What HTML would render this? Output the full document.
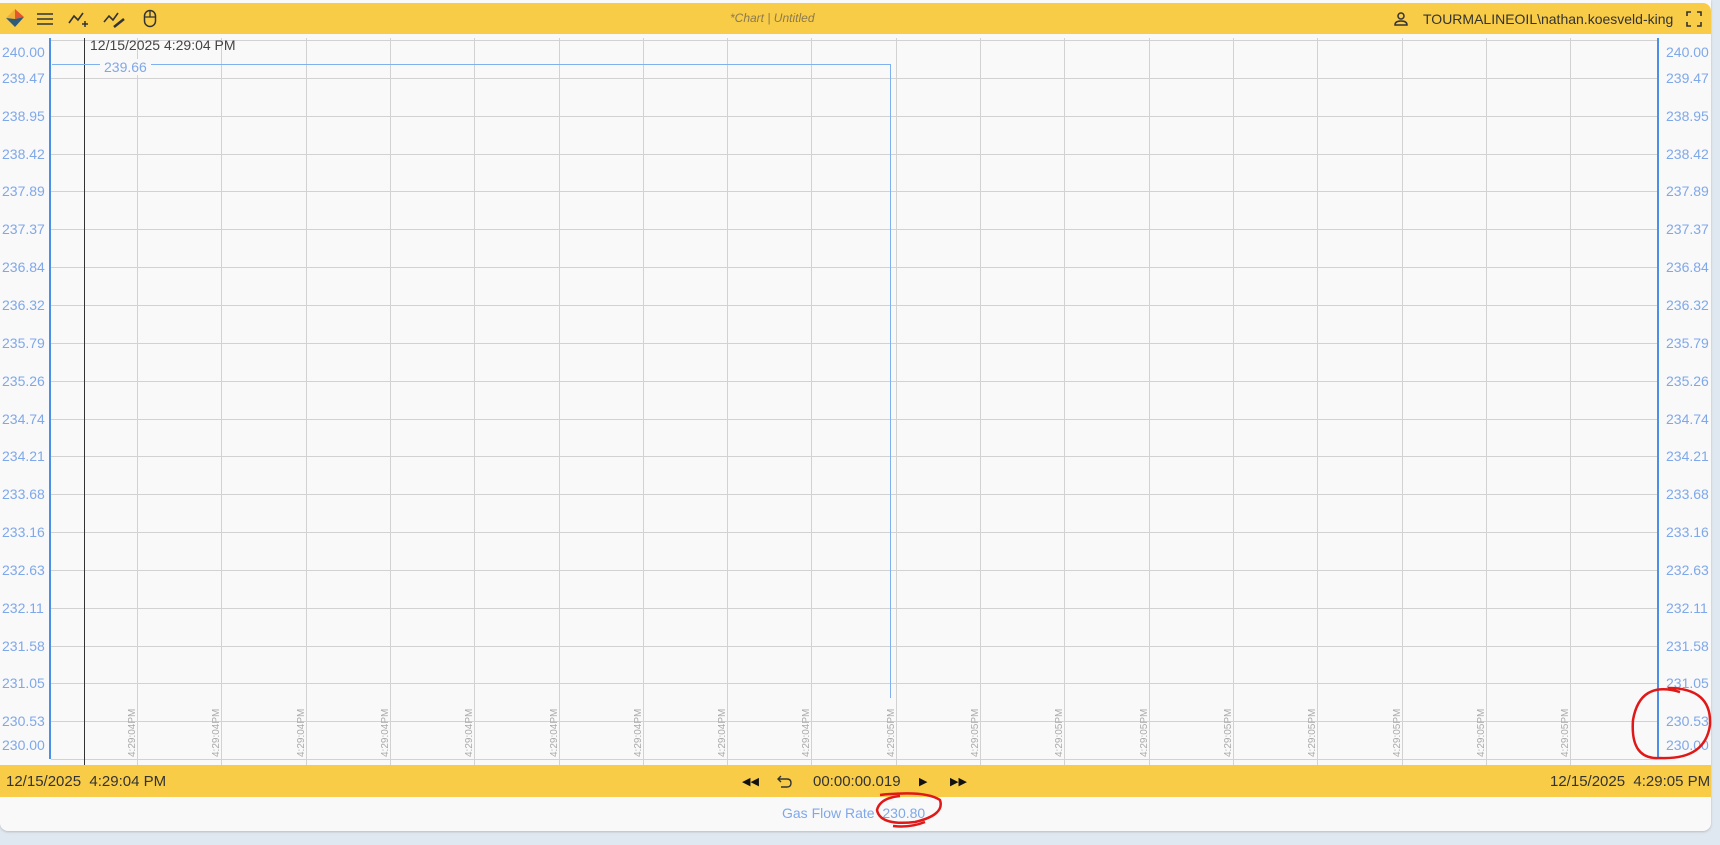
<!DOCTYPE html><html><head><style>
body{margin:0;width:1720px;height:845px;overflow:hidden;background:#dfe7f1;font-family:"Liberation Sans",sans-serif;position:relative}
.card{position:absolute;left:0;top:0;width:1711px;height:831px;background:#f9f9f9;border-radius:0 0 8px 8px;box-shadow:0 1px 2px #bbb}
.top{position:absolute;left:0;top:3px;width:1711px;height:31px;background:#f9cc47;border-radius:0 8px 0 0}
.bot{position:absolute;left:0;top:765px;width:1711px;height:32px;background:#f9cc47;font-size:15px;color:#333}
.abs{position:absolute}
.yl{position:absolute;font-size:14px;color:#7fa8ea;line-height:14px}
.tl{position:absolute;font-size:10px;color:#aaa;transform:rotate(-90deg);transform-origin:0 0;white-space:nowrap}
</style></head><body>
<div class="card"></div>
<div class="top">
<svg class="abs" style="left:4px;top:4px" width="22" height="24" viewBox="0 0 22 24"><path d="M11 2 L20 10 L11 12Z" fill="#e4572e"/><path d="M11 2 L2 11 L11 12Z" fill="#f2b134"/><path d="M2 11 L11 12 L20 10 L11 20Z" fill="#2d5b7a"/></svg>
<svg class="abs" style="left:36px;top:9px" width="18" height="14"><path d="M1 2H17M1 7H17M1 12H17" stroke="#333" stroke-width="1.6"/></svg>
<svg class="abs" style="left:68px;top:8px" width="22" height="18"><path d="M1 12L6 5L10 9L15 2" fill="none" stroke="#333" stroke-width="1.6"/><path d="M14 13H20M17 10V16" stroke="#333" stroke-width="1.5"/></svg>
<svg class="abs" style="left:103px;top:8px" width="24" height="18"><path d="M1 11L6 5L10 9L15 2" fill="none" stroke="#333" stroke-width="1.6"/><path d="M11 16L21 8" stroke="#333" stroke-width="2.5"/></svg>
<svg class="abs" style="left:143px;top:6px" width="14" height="20"><rect x="1.5" y="1.5" width="11" height="16" rx="5.5" fill="none" stroke="#333" stroke-width="1.5"/><path d="M7 2V8M2 8H12" stroke="#333" stroke-width="1.3"/></svg>
<div class="abs" style="left:730px;top:8px;font-size:12px;font-style:italic;color:#8a7a50">*Chart | Untitled</div>
<svg class="abs" style="left:1393px;top:8px" width="16" height="16"><circle cx="8" cy="5" r="3" fill="none" stroke="#333" stroke-width="1.5"/><path d="M2 14Q2 10 8 10Q14 10 14 14Z" fill="none" stroke="#333" stroke-width="1.5"/></svg>
<div class="abs" style="left:1423px;top:8px;font-size:14px;color:#333">TOURMALINEOIL\nathan.koesveld-king</div>
<svg class="abs" style="left:1686px;top:8px" width="16" height="16"><path d="M1 5V1H5M11 1H15V5M15 11V15H11M5 15H1V11" fill="none" stroke="#333" stroke-width="1.6"/></svg>
</div>
<div id="chart"></div>
<div class="abs" style="left:49px;top:38px;width:2px;height:721px;background:#4b8fe8"></div>
<div class="abs" style="left:1657px;top:38px;width:2px;height:721px;background:#4b8fe8"></div>
<div class="abs" style="left:84px;top:38px;width:1px;height:727px;background:#333"></div>
<div class="abs" style="left:90px;top:37px;font-size:14px;color:#444">12/15/2025 4:29:04 PM</div>
<div class="abs" style="left:52px;top:64px;width:839px;height:1px;background:#7fb0f0"></div>
<div class="abs" style="left:890px;top:64px;width:1px;height:634px;background:#7fb0f0"></div>
<div class="abs" style="left:100px;top:59px;font-size:14px;color:#7fa8ea;background:#f9f9f9;padding:0 4px">239.66</div>
<div class="bot">
<div class="abs" style="left:6px;top:8px">12/15/2025&nbsp; 4:29:04 PM</div>
<div class="abs" style="left:742px;top:10px;font-size:11px;color:#111">◀◀</div>
<svg class="abs" style="left:777px;top:9px" width="16" height="14"><path d="M4 2L1 5L4 8M1 5H10Q14 5 14 9Q14 13 10 13H4" fill="none" stroke="#333" stroke-width="1.4"/></svg>
<div class="abs" style="left:813px;top:8px">00:00:00.019</div>
<div class="abs" style="left:919px;top:10px;font-size:11px;color:#111">▶</div>
<div class="abs" style="left:950px;top:10px;font-size:11px;color:#111">▶▶</div>
<div class="abs" style="left:1550px;top:8px">12/15/2025&nbsp; 4:29:05 PM</div>
</div>
<div class="abs" style="left:782px;top:805px;font-size:14px;color:#7fa8ea">Gas Flow Rate&nbsp; 230.80</div>
<svg class="abs" style="left:0;top:0" width="1720" height="845"><path d="M1680 692 Q1640 680 1633 720 Q1630 760 1660 758 Q1705 760 1710 725 Q1712 688 1668 688" fill="none" stroke="#e01818" stroke-width="2.5"/><path d="M880 795 Q925 790 940 800 Q945 815 915 822 Q880 826 877 810 Q880 798 900 796 M893 826 Q910 828 925 822" fill="none" stroke="#e01818" stroke-width="2.5"/></svg>
<script>
var c=document.getElementById('chart'),h='';
for(var i=0;i<20;i++){var y=40+i*37.85;h+='<div class="abs" style="left:51px;top:'+y.toFixed(0)+'px;width:1606px;height:1px;background:#d2d2d2"></div>';}
for(var j=0;j<18;j++){var x=137+j*84.3;h+='<div class="abs" style="left:'+x.toFixed(0)+'px;top:38px;width:1px;height:727px;background:#d2d2d2"></div>';
h+='<div class="tl" style="left:'+(x-10).toFixed(0)+'px;top:757px">'+(j<9?'4:29:04PM':'4:29:05PM')+'</div>';}
h+='<div class="yl" style="left:2px;top:45px">240.00</div><div class="yl" style="left:1666px;top:45px">240.00</div>';
h+='<div class="yl" style="left:2px;top:738px">230.00</div><div class="yl" style="left:1666px;top:738px">230.00</div>';
for(var k=1;k<19;k++){var y=40+k*37.85-7,v=(240-k*10/19).toFixed(2);h+='<div class="yl" style="left:2px;top:'+y.toFixed(0)+'px">'+v+'</div><div class="yl" style="left:1666px;top:'+y.toFixed(0)+'px">'+v+'</div>';}
c.innerHTML=h;
</script>
</body></html>
